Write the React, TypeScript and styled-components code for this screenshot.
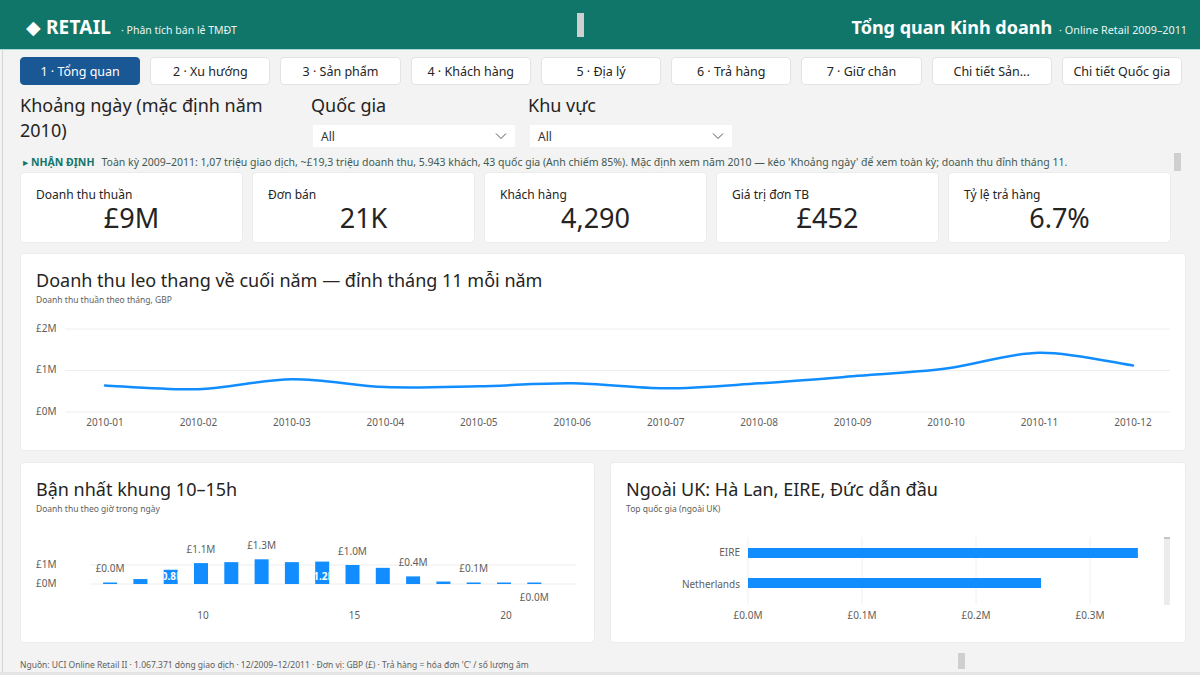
import React from "react";
import styled, { createGlobalStyle } from "styled-components";

const BLUE = "#118dff";
const MUTED = "#605e5c";

const GlobalStyle = createGlobalStyle`
  html, body {
    margin: 0;
    padding: 0;
    background: #f3f3f3;
  }
  body {
    font-family: "Noto Sans", "DejaVu Sans", sans-serif;
    color: #252423;
  }
  * {
    box-sizing: border-box;
  }
`;

const Page = styled.div`
  width: 1200px;
  height: 675px;
  overflow: hidden;
  display: flex;
  flex-direction: column;
  background: #f3f3f3;
`;

const Header = styled.header`
  height: 50px;
  flex: none;
  background: #11766a;
  border-bottom: 1px solid #a6dcd4;
  display: grid;
  grid-template-columns: 551px 8px 1fr;
  align-items: center;
  padding: 4px 13px 0 26px;
  color: #fff;
`;

const Brand = styled.div`
  display: flex;
  align-items: baseline;
  white-space: nowrap;
`;

const BrandName = styled.span`
  font-size: 19px;
  font-weight: 700;
  letter-spacing: 0.2px;
`;

const BrandTag = styled.span`
  font-size: 10.5px;
  margin-left: 10px;
  opacity: 0.92;
`;

const Thumb = styled.div<{ h: number }>`
  width: 7px;
  height: ${({ h }) => h}px;
  background: #cfcfcf;
`;

const HeaderThumb = styled(Thumb)`
  margin-top: -4px;
`;

const HeaderRight = styled.div`
  justify-self: end;
  display: flex;
  align-items: baseline;
  white-space: nowrap;
`;

const ReportName = styled.span`
  font-size: 18px;
  font-weight: 700;
`;

const ReportTag = styled.span`
  font-size: 10.8px;
  margin-left: 7px;
  opacity: 0.92;
`;

const Body = styled.main`
  flex: 1;
  margin-left: 2px;
  border-left: 1px solid #d6d6d6;
  padding: 0 14px 0 17px;
  display: flex;
  flex-direction: column;
`;

const Tabs = styled.nav`
  display: flex;
  gap: 10px;
  margin: 7px 4px 0 0;
  height: 28px;
`;

const Tab = styled.div<{ active?: boolean }>`
  flex: 1;
  display: flex;
  align-items: center;
  justify-content: center;
  border-radius: 4px;
  font-size: 12.5px;
  white-space: nowrap;
  background: ${({ active }) => (active ? "#1a5795" : "#fff")};
  color: ${({ active }) => (active ? "#fff" : "#252423")};
  border: 1px solid ${({ active }) => (active ? "#1a5795" : "#e3e3e3")};
`;

const Filters = styled.section`
  display: grid;
  grid-template-columns: 291px 217px 210px;
  margin-top: 8px;
`;

const Filter = styled.div`
  display: flex;
  flex-direction: column;
`;

const FilterLabel = styled.div<{ wrapWidth?: number }>`
  font-size: 18px;
  line-height: 25px;
  width: ${({ wrapWidth }) => (wrapWidth ? `${wrapWidth}px` : "auto")};
`;

const Dropdown = styled.div`
  margin: 7px 0 0 2px;
  width: 202px;
  height: 22px;
  background: #fff;
  display: flex;
  align-items: center;
  justify-content: space-between;
  padding: 0 8px;
  font-size: 12px;
  color: #333;
`;

const InsightRow = styled.div`
  display: flex;
  align-items: center;
  height: 18px;
  margin: 6px 0 0;
  padding-right: 5px;
`;

const InsightText = styled.div`
  flex: 1;
  font-size: 10.5px;
  color: #3f5a52;
  white-space: nowrap;
  overflow: hidden;
  padding-left: 3px;
`;

const InsightTag = styled.span`
  color: #11766a;
  font-weight: 700;
  font-size: 10.5px;
  margin-right: 7px;
`;

const KpiRow = styled.section`
  display: grid;
  grid-template-columns: repeat(5, 1fr);
  gap: 9px;
  height: 71px;
  margin: 1px 15px 0 0;
`;

const Card = styled.div`
  background: #fff;
  border: 1px solid #ececec;
  border-radius: 4px;
`;

const KpiCard = styled(Card)`
  padding: 13px 15px 0;
  display: flex;
  flex-direction: column;
`;

const KpiLabel = styled.div`
  font-size: 12px;
  line-height: 17px;
`;

const KpiValue = styled.div`
  font-size: 27px;
  line-height: 30px;
  text-align: center;
`;

const ChartCard = styled(Card)<{ h: number }>`
  height: ${({ h }) => h}px;
  padding: 13px 15px 0;
  overflow: hidden;
`;

const TrendCard = styled(ChartCard)`
  margin-top: 10px;
`;

const ChartTitle = styled.div`
  font-size: 18px;
  line-height: 26px;
`;

const ChartSub = styled.div`
  font-size: 8.5px;
  line-height: 13px;
  color: ${MUTED};
`;

const BottomRow = styled.section`
  display: grid;
  grid-template-columns: 575px 1fr;
  gap: 15px;
  margin-top: 11px;
`;

const Footer = styled.footer`
  display: grid;
  grid-template-columns: 938px 7px;
  align-items: center;
  margin-top: 9px;
  height: 16px;
`;

const FooterText = styled.div`
  font-size: 8.5px;
  color: ${MUTED};
  white-space: nowrap;
  padding-top: 7px;
`;

const BottomStrip = styled.div`
  height: 3px;
  background: #e4e4e4;
  flex: none;
`;

const AxisText = styled.text`
  font-size: 10px;
  fill: ${MUTED};
  font-family: "Noto Sans", sans-serif;
`;

const tabs = [
  "1 · Tổng quan",
  "2 · Xu hướng",
  "3 · Sản phẩm",
  "4 · Khách hàng",
  "5 · Địa lý",
  "6 · Trả hàng",
  "7 · Giữ chân",
  "Chi tiết Sản...",
  "Chi tiết Quốc gia",
];

const kpis = [
  { label: "Doanh thu thuần", value: "£9M" },
  { label: "Đơn bán", value: "21K" },
  { label: "Khách hàng", value: "4,290" },
  { label: "Giá trị đơn TB", value: "£452" },
  { label: "Tỷ lệ trả hàng", value: "6.7%" },
];

const monthly = [0.64, 0.55, 0.79, 0.6, 0.62, 0.69, 0.57, 0.69, 0.86, 1.05, 1.43, 1.12];

const hourly = [
  { h: 7, v: 0.04, label: "£0.0M", pos: "top" },
  { h: 8, v: 0.26 },
  { h: 9, v: 0.75, label: "£0.8M", pos: "in" },
  { h: 10, v: 1.1, label: "£1.1M", pos: "top" },
  { h: 11, v: 1.15 },
  { h: 12, v: 1.3, label: "£1.3M", pos: "top" },
  { h: 13, v: 1.15 },
  { h: 14, v: 1.18, label: "£1.2M", pos: "in" },
  { h: 15, v: 1.0, label: "£1.0M", pos: "top" },
  { h: 16, v: 0.85 },
  { h: 17, v: 0.4, label: "£0.4M", pos: "top" },
  { h: 18, v: 0.13 },
  { h: 19, v: 0.08, label: "£0.1M", pos: "top" },
  { h: 20, v: 0.05 },
  { h: 21, v: 0.02, label: "£0.0M", pos: "below" },
];

const countries = [
  { name: "EIRE", v: 0.342 },
  { name: "Netherlands", v: 0.257 },
];

function smoothPath(pts: [number, number][]) {
  let d = `M${pts[0][0]},${pts[0][1]}`;
  for (let i = 0; i < pts.length - 1; i++) {
    const p0 = pts[i - 1] || pts[i];
    const p1 = pts[i];
    const p2 = pts[i + 1];
    const p3 = pts[i + 2] || p2;
    const c1x = p1[0] + (p2[0] - p0[0]) / 6;
    const c1y = p1[1] + (p2[1] - p0[1]) / 6;
    const c2x = p2[0] - (p3[0] - p1[0]) / 6;
    const c2y = p2[1] - (p3[1] - p1[1]) / 6;
    d += ` C${c1x},${c1y} ${c2x},${c2y} ${p2[0]},${p2[1]}`;
  }
  return d;
}

const Chevron = () => (
  <svg width="12" height="8" viewBox="0 0 12 8">
    <path d="M1 1.5 L6 6.5 L11 1.5" fill="none" stroke="#555" strokeWidth="1" />
  </svg>
);

const TrendChart = () => {
  const x0 = 69;
  const step = 93.45;
  const base = 106;
  const scale = 41.5;
  const pts = monthly.map((v, i) => [x0 + i * step, base - v * scale] as [number, number]);
  return (
    <svg width="1134" height="140" style={{ display: "block" }}>
      {[0, 1, 2].map((m) => (
        <g key={m}>
          <line x1={29} x2={1134} y1={base - m * scale} y2={base - m * scale} stroke="#eeeeee" />
          <AxisText x={0} y={base - m * scale} dominantBaseline="middle">
            £{m}M
          </AxisText>
        </g>
      ))}
      {monthly.map((_, i) => (
        <AxisText key={i} x={x0 + i * step} y={117} textAnchor="middle" dominantBaseline="middle">
          2010-{String(i + 1).padStart(2, "0")}
        </AxisText>
      ))}
      <path d={smoothPath(pts)} fill="none" stroke={BLUE} strokeWidth="2.5" strokeLinecap="round" />
    </svg>
  );
};

const HourChart = () => {
  const base = 69;
  const scale = 19;
  const cx = (h: number) => 165 + (h - 10) * 30.3;
  return (
    <svg width="545" height="125" style={{ display: "block" }}>
      <line x1={54} x2={540} y1={base - scale} y2={base - scale} stroke="#eeeeee" />
      <line x1={54} x2={540} y1={base} y2={base} stroke="#eeeeee" />
      <AxisText x={0} y={base - scale} dominantBaseline="middle">£1M</AxisText>
      <AxisText x={0} y={base} dominantBaseline="middle">£0M</AxisText>
      <defs>
        {hourly.map((b) => (
          <clipPath id={`bar-${b.h}`} key={b.h}>
            <rect x={cx(b.h) - 7} y={base - Math.max(b.v * scale, 1.5)} width={14} height={Math.max(b.v * scale, 1.5)} />
          </clipPath>
        ))}
      </defs>
      {hourly.map((b) => {
        const hgt = Math.max(b.v * scale, 1.5);
        const top = base - hgt;
        return (
          <g key={b.h}>
            <rect x={cx(b.h) - 7} y={top} width={14} height={hgt} fill={BLUE} />
            {b.label && b.pos === "top" && (
              <AxisText x={cx(b.h)} y={top - 13} textAnchor="middle" dominantBaseline="middle">
                {b.label}
              </AxisText>
            )}
            {b.label && b.pos === "below" && (
              <AxisText x={cx(b.h)} y={base + 14} textAnchor="middle" dominantBaseline="middle">
                {b.label}
              </AxisText>
            )}
            {b.label && b.pos === "in" && (
              <text
                x={cx(b.h)}
                y={base - 7}
                textAnchor="middle"
                dominantBaseline="middle"
                fontSize="10"
                fontWeight="700"
                fill="#fff"
                fontFamily="Noto Sans, sans-serif"
                clipPath={`url(#bar-${b.h})`}
              >
                {b.label}
              </text>
            )}
          </g>
        );
      })}
      {[10, 15, 20].map((h) => (
        <AxisText key={h} x={cx(h) + 2} y={101} textAnchor="middle" dominantBaseline="middle">
          {h}
        </AxisText>
      ))}
    </svg>
  );
};

const CountryChart = () => {
  const x0 = 122;
  const per = 1140;
  const ticks = [0, 0.1, 0.2, 0.3];
  return (
    <svg width="546" height="125" style={{ display: "block" }}>
      {ticks.map((t) => (
        <g key={t}>
          <line x1={x0 + t * per} x2={x0 + t * per} y1={22} y2={90} stroke="#f0f0f0" />
          <AxisText x={x0 + t * per} y={101} textAnchor="middle" dominantBaseline="middle">
            £{t.toFixed(1)}M
          </AxisText>
        </g>
      ))}
      {countries.map((c, i) => (
        <g key={c.name}>
          <AxisText x={114} y={38 + i * 32} textAnchor="end" dominantBaseline="middle">
            {c.name}
          </AxisText>
          <rect x={x0} y={33 + i * 30} width={c.v * per} height={10} fill={BLUE} />
        </g>
      ))}
      <rect x={538} y={22} width={6} height={68} fill="#ececec" />
      <rect x={538} y={22} width={6} height={2} fill="#c4c4c4" />
    </svg>
  );
};

export default function App() {
  return (
    <Page>
      <GlobalStyle />
      <Header>
        <Brand>
          <BrandName>◆ RETAIL</BrandName>
          <BrandTag>· Phân tích bán lẻ TMĐT</BrandTag>
        </Brand>
        <HeaderThumb h={24} />
        <HeaderRight>
          <ReportName>Tổng quan Kinh doanh</ReportName>
          <ReportTag>· Online Retail 2009–2011</ReportTag>
        </HeaderRight>
      </Header>
      <Body>
        <Tabs>
          {tabs.map((t, i) => (
            <Tab key={t} active={i === 0}>
              {t}
            </Tab>
          ))}
        </Tabs>
        <Filters>
          <Filter>
            <FilterLabel wrapWidth={262}>Khoảng ngày (mặc định năm 2010)</FilterLabel>
          </Filter>
          <Filter>
            <FilterLabel>Quốc gia</FilterLabel>
            <Dropdown>
              All
              <Chevron />
            </Dropdown>
          </Filter>
          <Filter>
            <FilterLabel>Khu vực</FilterLabel>
            <Dropdown>
              All
              <Chevron />
            </Dropdown>
          </Filter>
        </Filters>
        <InsightRow>
          <InsightText>
            <InsightTag>▸ NHẬN ĐỊNH</InsightTag>
            Toàn kỳ 2009–2011: 1,07 triệu giao dịch, ~£19,3 triệu doanh thu, 5.943 khách, 43 quốc gia (Anh chiếm 85%). Mặc
            định xem năm 2010 — kéo 'Khoảng ngày' để xem toàn kỳ; doanh thu đỉnh tháng 11.
          </InsightText>
          <Thumb h={18} />
        </InsightRow>
        <KpiRow>
          {kpis.map((k) => (
            <KpiCard key={k.label}>
              <KpiLabel>{k.label}</KpiLabel>
              <KpiValue>{k.value}</KpiValue>
            </KpiCard>
          ))}
        </KpiRow>
        <TrendCard h={198}>
          <ChartTitle>Doanh thu leo thang về cuối năm — đỉnh tháng 11 mỗi năm</ChartTitle>
          <ChartSub>Doanh thu thuần theo tháng, GBP</ChartSub>
          <TrendChart />
        </TrendCard>
        <BottomRow>
          <ChartCard h={181}>
            <ChartTitle>Bận nhất khung 10–15h</ChartTitle>
            <ChartSub>Doanh thu theo giờ trong ngày</ChartSub>
            <HourChart />
          </ChartCard>
          <ChartCard h={181}>
            <ChartTitle>Ngoài UK: Hà Lan, EIRE, Đức dẫn đầu</ChartTitle>
            <ChartSub>Top quốc gia (ngoài UK)</ChartSub>
            <CountryChart />
          </ChartCard>
        </BottomRow>
        <Footer>
          <FooterText>
            Nguồn: UCI Online Retail II · 1.067.371 dòng giao dịch · 12/2009–12/2011 · Đơn vị: GBP (£) · Trả hàng = hóa đơn
            'C' / số lượng âm
          </FooterText>
          <Thumb h={16} />
        </Footer>
      </Body>
      <BottomStrip />
    </Page>
  );
}
